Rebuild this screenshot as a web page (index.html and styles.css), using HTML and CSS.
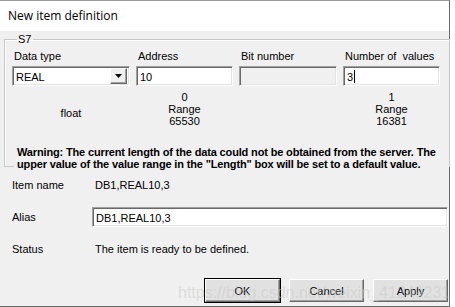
FILE: index.html
```html
<!DOCTYPE html>
<html>
<head>
<meta charset="utf-8">
<link rel="stylesheet" href="styles.css">
</head>
<body>
<div class="dialog">
  <div class="titlebar">New item definition</div>
  <div class="content">
    <fieldset class="group">
      <legend>S7</legend>
      <div class="fields">
        <div class="field">
          <div class="label">Data type</div>
          <div class="box select"><span class="val">REAL</span><span class="drop"><svg width="7" height="4" viewBox="0 0 7 4"><path d="M0 0H7L3.5 4Z" fill="#000"/></svg></span></div>
          <div class="info mid">float</div>
        </div>
        <div class="field">
          <div class="label">Address</div>
          <div class="box"><span class="val">10</span></div>
          <div class="info"><span>0</span><span>Range</span><span>65530</span></div>
        </div>
        <div class="field">
          <div class="label">Bit number</div>
          <div class="box disabled"></div>
          <div class="info"></div>
        </div>
        <div class="field">
          <div class="label">Number of &nbsp;values</div>
          <div class="box"><span class="val">3</span><span class="caret"></span></div>
          <div class="info"><span>1</span><span>Range</span><span>16381</span></div>
        </div>
      </div>
      <p class="warning">Warning: The current length of the data could not be obtained from the server. The upper value of the value range in the "Length" box will be set to a default value.</p>
    </fieldset>
    <div class="form">
      <div class="flabel r1">Item name</div>
      <div class="ftext r1">DB1,REAL10,3</div>
      <div class="flabel r2">Alias</div>
      <div class="box alias r2"><span class="val">DB1,REAL10,3</span></div>
      <div class="flabel r3">Status</div>
      <div class="ftext r3">The item is ready to be defined.</div>
    </div>
    <div class="buttons">
      <button class="btn default">OK</button>
      <button class="btn">Cancel</button>
      <button class="btn">Apply</button>
    </div>
    <div class="watermark">https://blog.csdn.net/weixin_41249231</div>
  </div>
</div>
</body>
</html>
```
FILE: styles.css
```css
html, body {
  margin: 0;
  padding: 0;
  background: #ffffff;
}
body {
  width: 455px;
  height: 307px;
  overflow: hidden;
  font-family: "Liberation Sans", Arial, sans-serif;
  font-size: 11px;
  color: #000;
}
.dialog {
  width: 449px;
  height: 305px;
  border-top: 1px solid #9a9a9a;
  border-right: 1px solid #6b6b6b;
  border-bottom: 1px solid #6b6b6b;
  background: #f0f0f0;
  display: flex;
  flex-direction: column;
}
.titlebar {
  height: 30px;
  background: #fff;
  font-family: "Open Sans", "Noto Sans", sans-serif;
  font-size: 12px;
  line-height: 30px;
  padding-left: 8px;
  color: #000;
}
.content {
  position: relative;
  flex: 1;
  display: flex;
  flex-direction: column;
}
.group {
  margin: 2px 0 0 4px;
  width: 444px;
  height: 134px;
  box-sizing: border-box;
  padding: 0 0 0 7px;
  border: 1px solid #c8c8c8;
  box-shadow: inset 1px 1px 0 #fff;
  position: relative;
}
.group legend {
  margin-left: 5px;
  padding: 0 2px 0 1px;
  line-height: 13px;
  font-size: 11px;
}
.fields {
  display: grid;
  grid-template-columns: 118px 97px 98px 97px;
  column-gap: 6px;
  margin-top: 4px;
}
.field {
  display: flex;
  flex-direction: column;
}
.label {
  height: 14px;
  line-height: 13px;
  padding-left: 2px;
  white-space: pre;
}
.box {
  height: 20px;
  box-sizing: border-box;
  background: #fff;
  border-top: 1px solid #a0a0a0;
  border-left: 1px solid #a0a0a0;
  border-right: 1px solid #fff;
  border-bottom: 1px solid #fff;
  box-shadow: inset 1px 1px 0 #696969, inset -1px -1px 0 #e3e3e3;
  display: flex;
  align-items: center;
  padding-left: 3px;
  margin-top: 2px;
}
.box .val {
  line-height: 14px;
  padding-top: 1px;
}
.disabled {
  background: #f0f0f0;
}
.select .drop {
  margin-left: auto;
  margin-right: 2px;
  width: 17px;
  height: 16px;
  box-sizing: border-box;
  background: #f0f0f0;
  border-top: 1px solid #fff;
  border-left: 1px solid #fff;
  border-right: 1px solid #696969;
  border-bottom: 1px solid #696969;
  box-shadow: inset -1px -1px 0 #a0a0a0;
  display: flex;
  align-items: center;
  justify-content: center;
}
.caret {
  width: 1px;
  height: 13px;
  background: #000;
  margin-left: 1px;
}
.info {
  height: 38px;
  margin-top: 5px;
  display: flex;
  flex-direction: column;
  align-items: center;
  line-height: 12px;
}
.info.mid {
  justify-content: center;
  padding-top: 6px;
  box-sizing: border-box;
}
.warning {
  position: relative;
  margin: 17px 0 0 2px;
  padding-left: 3px;
  width: 432px;
  font-weight: bold;
  line-height: 12px;
  background: #f0f0f0;
  letter-spacing: -0.15px;
}
.form {
  display: grid;
  grid-template-columns: 80px 356px;
  padding-left: 12px;
  margin-top: 6px;
  align-items: center;
}
.flabel, .ftext {
  line-height: 13px;
  display: flex;
  align-items: center;
}
.ftext {
  padding-left: 3px;
}
.r1 {
  height: 24px;
}
.r2 {
  height: 20px;
  margin-top: 10px;
}
.form .alias {
  margin-top: 10px;
  height: 20px;
}
.r3 {
  height: 24px;
  margin-top: 10px;
}
.buttons {
  margin-top: auto;
  margin-bottom: 4px;
  display: flex;
  justify-content: flex-end;
  gap: 9px;
  padding-right: 1px;
}
.buttons .btn {
  width: 75px;
  height: 23px;
  box-sizing: border-box;
  font-family: "Liberation Sans", Arial, sans-serif;
  font-size: 11px;
  color: #000;
  background: #e1e1e1;
  border-top: 1px solid #fff;
  border-left: 1px solid #fff;
  border-right: 1px solid #696969;
  border-bottom: 1px solid #696969;
  box-shadow: inset -1px -1px 0 #a0a0a0;
  padding: 0;
}
.buttons .default {
  outline: 1px solid #000;
}
.watermark {
  position: absolute;
  left: 178px;
  bottom: 4px;
  font-family: "Liberation Sans", Arial, sans-serif;
  font-size: 16px;
  color: rgba(200, 200, 200, 0.5);
  white-space: nowrap;
  pointer-events: none;
}
```
